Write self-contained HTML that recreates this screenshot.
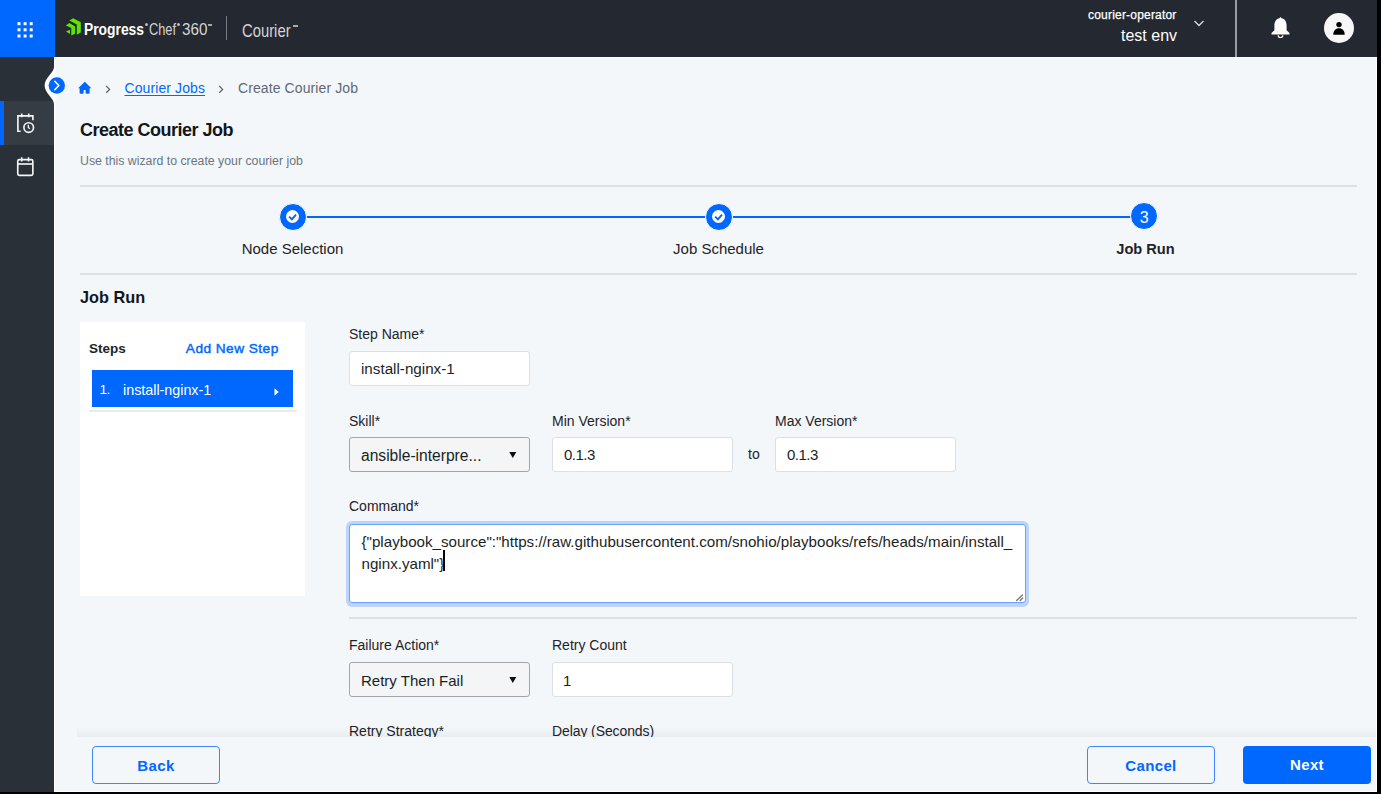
<!DOCTYPE html>
<html><head><meta charset="utf-8">
<style>
*{box-sizing:border-box;margin:0;padding:0}
html,body{width:1381px;height:794px;overflow:hidden;background:#000}
body{font-family:"Liberation Sans",sans-serif;position:relative;color:#1b1f24}
.a{position:absolute;white-space:nowrap}
#hdr{left:0;top:0;width:1377px;height:57px;background:#242831}
#grid{left:0;top:0;width:55px;height:57px;background:#0068ff}
#side{left:0;top:57px;width:54px;height:735px;background:#2a3038}
#main{left:54px;top:57px;width:1323px;height:735px;background:#f3f7fa;border:1px solid #fff}
.lbl{font-size:14px;color:#1f2328;line-height:16px}
.inp{background:#fff;border:1px solid #dcdfe3;border-radius:3px}
.sel{background:#f3f5f7;border:1px solid #a2a6ab;border-radius:3px}
.val{font-size:15px;color:#1b1f24;line-height:18px}
.btn{border-radius:4px;font-weight:bold;font-size:15px;letter-spacing:0.35px;text-align:center;line-height:37px}
</style></head><body>
<!-- header -->
<div id="hdr" class="a"></div>
<div id="grid" class="a"></div>
<svg class="a" style="left:17px;top:22px" width="17" height="17" viewBox="0 0 17 17" fill="#fff">
<rect x="0.5" y="0.2" width="3" height="3"/><rect x="6.6" y="0.2" width="3" height="3"/><rect x="12.7" y="0.2" width="3" height="3"/>
<rect x="0.5" y="6.3" width="3" height="3"/><rect x="6.6" y="6.3" width="3" height="3"/><rect x="12.7" y="6.3" width="3" height="3"/>
<rect x="0.5" y="12.5" width="3" height="3"/><rect x="6.6" y="12.5" width="3" height="3"/><rect x="12.7" y="12.5" width="3" height="3"/>
</svg>
<!-- progress logo -->
<svg class="a" style="left:60px;top:12px" width="24" height="26" viewBox="0 0 24 26" fill="#5ce500">
<path d="M9.4 8.5 L13.2 6.2 L20.8 10.2 V20.6 L16.8 22.7 V12.5 Z"/>
<path d="M5.9 13.4 L9.4 11.1 L15.1 14.4 V21.7 L11.3 23.6 V15.9 Z"/>
<path d="M6 19.6 L10 17.7 V22 Z"/>
</svg>
<div class="a" style="left:84px;top:19.5px;font-size:16px;font-weight:bold;color:#fff;line-height:20px;transform:scaleX(0.865);transform-origin:0 0">Progress</div>
<div class="a" style="left:145px;top:22.5px;width:3px;height:3px;border-radius:50%;background:#bbb"></div>
<div class="a" style="left:149px;top:19.5px;font-size:16px;color:#d4d4d4;line-height:20px;transform:scaleX(0.8);transform-origin:0 0">Chef</div>
<div class="a" style="left:177px;top:22.5px;width:3px;height:3px;border-radius:50%;background:#bbb"></div>
<div class="a" style="left:181.5px;top:19.5px;font-size:16px;color:#d4d4d4;line-height:20px;transform:scaleX(0.95);transform-origin:0 0">360</div>
<div class="a" style="left:208px;top:24px;width:4px;height:2px;background:#aaa"></div>
<div class="a" style="left:226px;top:16px;width:1px;height:24px;background:#7a7e84"></div>
<div class="a" style="left:242px;top:18.5px;font-size:19px;color:#d4d4d4;line-height:24px;transform:scaleX(0.78);transform-origin:0 0">Courier</div>
<div class="a" style="left:293px;top:25px;width:5px;height:2px;background:#aaa"></div>
<div class="a" style="left:1088px;top:7px;font-size:12px;color:#fff;line-height:16px;letter-spacing:0.2px;-webkit-text-stroke:0.25px #fff">courier-operator</div>
<div class="a" style="left:1121px;top:27px;font-size:16px;color:#fff;line-height:18px">test env</div>
<svg class="a" style="left:1193px;top:19px" width="12" height="9" viewBox="0 0 12 9"><path d="M1.5 2 L6 6.5 L10.5 2" stroke="#dcdcdc" stroke-width="1.3" fill="none"/></svg>
<div class="a" style="left:1235px;top:0;width:2px;height:57px;background:#9a9ea3"></div>
<svg class="a" style="left:1270px;top:16px" width="21" height="23" viewBox="0 0 21 23" fill="#fff">
<path d="M10.5 1.2 C11 1.2 11.4 1.6 11.4 2.3 C15 2.9 16.6 5.8 16.6 9.6 V14.3 L19.5 17.1 V18.6 H1.5 V17.1 L4.4 14.3 V9.6 C4.4 5.8 6 2.9 9.6 2.3 C9.6 1.6 10 1.2 10.5 1.2 Z"/>
<path d="M8.2 19.2 A2.3 2.3 0 0 0 12.8 19.2" stroke="#fff" stroke-width="1.2" fill="none"/>
</svg>
<div class="a" style="left:1324px;top:13px;width:30px;height:30px;border-radius:50%;background:#f7f7f7"></div>
<svg class="a" style="left:1332px;top:20px" width="14" height="16" viewBox="0 0 14 16" fill="#000">
<circle cx="7" cy="4.6" r="2.7"/><path d="M1.3 14.7 C1.3 10.8 3.6 8.2 7 8.2 C10.4 8.2 12.7 10.8 12.7 14.7 Z"/>
</svg>
<!-- sidebar -->
<div id="side" class="a"></div>
<div class="a" style="left:0;top:101px;width:54px;height:44px;background:#353c43"></div>
<div class="a" style="left:0;top:101px;width:3.5px;height:44px;background:#0068ff"></div>
<svg class="a" style="left:10px;top:105px" width="30" height="35" viewBox="0 0 30 35" fill="none" stroke="#f4f4f4" stroke-width="1.65">
<path d="M10.6 26.2 H7.9 V10.8 H22.9 V15.2"/><path d="M11.7 8.6 V12.3 M18.7 8.6 V12.3"/>
<circle cx="18.7" cy="22.5" r="4.8"/><path d="M18.3 19.8 V22.4 L19.9 23.8" stroke-width="1.3"/>
</svg>
<svg class="a" style="left:10px;top:150px" width="30" height="30" viewBox="0 0 30 30" fill="none" stroke="#f4f4f4" stroke-width="1.65">
<rect x="7.75" y="9.65" width="15.1" height="15.7" rx="1.5"/><path d="M7.75 14 H22.85"/><path d="M11.7 7.2 V11.5 M18.5 7.2 V11.5"/>
</svg>
<!-- main -->
<div id="main" class="a"></div>
<!-- notch + collapse -->
<svg class="a" style="left:40px;top:57px" width="30" height="60" viewBox="0 0 30 60">
<path d="M14 1 V10 C14 15.5 4.6 21 4.6 28.5 C4.6 36 14 41.5 14 47 V60 H15 V48 C16 43 17 40 17 28.5 C17 17 16 14 15 9 V0 Z" fill="#fff"/>
<circle cx="16.8" cy="28.5" r="8.2" fill="#0068ff"/>
<path d="M14.8 24.3 L18.8 28.5 L14.8 32.7" stroke="#fff" stroke-width="1.6" fill="none" stroke-linecap="round" stroke-linejoin="round"/>
</svg>
<!-- breadcrumb -->
<svg class="a" style="left:74px;top:76px" width="20" height="20" viewBox="0 0 20 20" fill="#0068ff">
<path d="M10.8 5.8 L17.4 12.2 H15.6 V16.8 Q15.6 17.8 14.6 17.8 H12.6 Q11.6 17.8 11.6 16.8 V14 H9.6 V16.8 Q9.6 17.8 8.6 17.8 H6.6 Q5.6 17.8 5.6 16.8 V12.2 H4.1 Z"/>
</svg>
<svg class="a" style="left:104px;top:84px" width="8" height="10" viewBox="0 0 8 10"><path d="M2.2 2 L5.6 5.4 L2.2 8.8" stroke="#60666d" stroke-width="1.3" fill="none"/></svg>
<div class="a" style="left:124.5px;top:79px;font-size:14px;letter-spacing:0.1px;color:#0068ff;line-height:18px;text-decoration:underline;text-underline-offset:2px">Courier Jobs</div>
<svg class="a" style="left:217px;top:84px" width="8" height="10" viewBox="0 0 8 10"><path d="M2.2 2 L5.6 5.4 L2.2 8.8" stroke="#60666d" stroke-width="1.3" fill="none"/></svg>
<div class="a" style="left:238px;top:79px;font-size:14px;letter-spacing:0.1px;color:#5f6873;line-height:18px">Create Courier Job</div>
<!-- title -->
<div class="a" style="left:80px;top:120px;font-size:18px;font-weight:bold;color:#12161b;line-height:20px;letter-spacing:-0.5px">Create Courier Job</div>
<div class="a" style="left:80px;top:153px;font-size:12.3px;color:#6b7580;line-height:16px">Use this wizard to create your courier job</div>
<div class="a" style="left:80px;top:185px;width:1277px;height:2px;background:#dde1e5"></div>
<!-- stepper -->
<div class="a" style="left:292px;top:216px;width:853px;height:2px;background:#0068ff"></div>
<div class="a" style="left:278.8px;top:202.6px;width:28px;height:28px;border-radius:50%;background:#0068ff;border:1px solid #fff"></div>
<div class="a" style="left:286.3px;top:210.1px;width:13px;height:13px;border-radius:50%;background:#fff"></div>
<svg class="a" style="left:286.3px;top:210.1px" width="13" height="13" viewBox="0 0 13 13"><path d="M3.1 6.6 L5.9 9.3 L10 4.6" stroke="#0068ff" stroke-width="1.9" fill="none"/></svg>
<div class="a" style="left:704.6px;top:202.5px;width:28px;height:28px;border-radius:50%;background:#0068ff;border:1px solid #fff"></div>
<div class="a" style="left:712.1px;top:210.0px;width:13px;height:13px;border-radius:50%;background:#fff"></div>
<svg class="a" style="left:712.1px;top:210.0px" width="13" height="13" viewBox="0 0 13 13"><path d="M3.1 6.6 L5.9 9.3 L10 4.6" stroke="#0068ff" stroke-width="1.9" fill="none"/></svg>
<div class="a" style="left:1130.3px;top:202.2px;width:28px;height:28px;border-radius:50%;background:#0068ff;border:1px solid #fff;color:#fff;font-size:16px;line-height:29px;text-align:center">3</div>
<div class="a" style="left:192px;top:240px;width:201px;text-align:center;font-size:15px;color:#1f2328;line-height:18px">Node Selection</div>
<div class="a" style="left:618px;top:240px;width:201px;text-align:center;font-size:15px;color:#1f2328;line-height:18px">Job Schedule</div>
<div class="a" style="left:1045px;top:240px;width:201px;text-align:center;font-size:14.6px;font-weight:bold;color:#1f2328;line-height:18px">Job Run</div>
<div class="a" style="left:80px;top:273px;width:1277px;height:2px;background:#dde1e5"></div>
<div class="a" style="left:80px;top:287px;font-size:16.3px;font-weight:bold;color:#12161b;line-height:20px">Job Run</div>
<!-- steps panel -->
<div class="a" style="left:80px;top:322px;width:225px;height:274px;background:#fff"></div>
<div class="a" style="left:89px;top:341px;font-size:13.5px;font-weight:bold;color:#1f2328;line-height:16px">Steps</div>
<div class="a" style="left:185.8px;top:340.5px;font-size:13.7px;color:#0068ff;line-height:16px;letter-spacing:0.45px;-webkit-text-stroke:0.45px #0068ff">Add New Step</div>
<div class="a" style="left:92px;top:370px;width:201px;height:37px;background:#0068ff"></div>
<div class="a" style="left:99.6px;top:382px;font-size:13.6px;letter-spacing:-0.6px;color:#fff;line-height:16px">1.</div>
<div class="a" style="left:123px;top:382px;font-size:14.3px;color:#fff;line-height:16px">install-nginx-1</div>
<svg class="a" style="left:273px;top:387px" width="7" height="10" viewBox="0 0 7 10"><path d="M1.5 1.2 L5.8 5 L1.5 8.8 Z" fill="#fff"/></svg>
<div class="a" style="left:89px;top:410px;width:208px;height:2px;background:#e8ebee"></div>
<!-- form -->
<div class="a lbl" style="left:349px;top:326px">Step Name*</div>
<div class="a inp" style="left:349px;top:351px;width:181px;height:35px"></div>
<div class="a val" style="left:361px;top:360px;font-size:15.2px">install-nginx-1</div>

<div class="a lbl" style="left:349px;top:413px">Skill*</div>
<div class="a sel" style="left:349px;top:437px;width:181px;height:35px"></div>
<div class="a val" style="left:361px;top:446.5px;font-size:15.6px">ansible-interpre...</div>
<svg class="a" style="left:508px;top:451px" width="10" height="8" viewBox="0 0 10 8"><path d="M1.3 0.9 H8.3 L4.8 6.9 Z" fill="#0d0f12"/></svg>

<div class="a lbl" style="left:552px;top:413px">Min Version*</div>
<div class="a inp" style="left:552px;top:437px;width:181px;height:35px"></div>
<div class="a val" style="left:564px;top:446px;letter-spacing:-0.5px">0.1.3</div>
<div class="a" style="left:748px;top:446px;font-size:14px;color:#1f2328;line-height:16px">to</div>
<div class="a lbl" style="left:775px;top:413px">Max Version*</div>
<div class="a inp" style="left:775px;top:437px;width:181px;height:35px"></div>
<div class="a val" style="left:787px;top:446px;letter-spacing:-0.5px">0.1.3</div>

<div class="a lbl" style="left:349px;top:498px">Command*</div>
<div class="a" style="left:345.5px;top:520.5px;width:683.5px;height:86px;border-radius:6px;background:#bcd4fa"></div>
<div class="a" style="left:349px;top:524.2px;width:676.7px;height:78.8px;border-radius:3px;background:#fff;border:1.5px solid #6aa3ff"></div>
<div class="a val" style="left:361.5px;top:531px;line-height:22px;font-size:15.15px">{"playbook_source":"https://raw.githubusercontent.com/snohio/playbooks/refs/heads/main/install_<br>nginx.yaml"}</div>
<div class="a" style="left:443px;top:550px;width:1.5px;height:21px;background:#000"></div>
<svg class="a" style="left:1012px;top:591px" width="12" height="12" viewBox="0 0 12 12"><path d="M4.6 9.5 L10.5 4 M8.2 9.5 L10.7 7" stroke="#7a7a7a" stroke-width="1.4" stroke-linecap="round"/></svg>
<div class="a" style="left:349px;top:617px;width:1008px;height:2px;background:#dde1e5"></div>

<div class="a lbl" style="left:349px;top:637px">Failure Action*</div>
<div class="a sel" style="left:349px;top:662px;width:181px;height:35px"></div>
<div class="a val" style="left:361px;top:672px">Retry Then Fail</div>
<svg class="a" style="left:508px;top:676px" width="10" height="8" viewBox="0 0 10 8"><path d="M1.3 0.9 H8.3 L4.8 6.9 Z" fill="#0d0f12"/></svg>
<div class="a lbl" style="left:552px;top:637px">Retry Count</div>
<div class="a inp" style="left:552px;top:662px;width:181px;height:35px"></div>
<div class="a val" style="left:563px;top:672px">1</div>

<div class="a lbl" style="left:349px;top:723px">Retry Strategy*</div>
<div class="a lbl" style="left:552px;top:723px;letter-spacing:-0.1px">Delay (Seconds)</div>
<!-- footer -->
<div class="a" style="left:55px;top:737px;width:1321px;height:54px;background:#f3f7fa"></div>
<div class="a" style="left:77px;top:726px;width:1299px;height:11px;background:linear-gradient(to bottom,rgba(0,0,0,0),rgba(0,0,0,0.045))"></div>
<div class="a btn" style="left:92px;top:746px;width:128px;height:38px;border:1.5px solid #3d86ff;color:#0068ff">Back</div>
<div class="a btn" style="left:1087px;top:746px;width:128px;height:38px;border:1.5px solid #3d86ff;color:#0068ff">Cancel</div>
<div class="a btn" style="left:1243px;top:746px;width:128px;height:38px;background:#0068ff;color:#fff">Next</div>

</body></html>
